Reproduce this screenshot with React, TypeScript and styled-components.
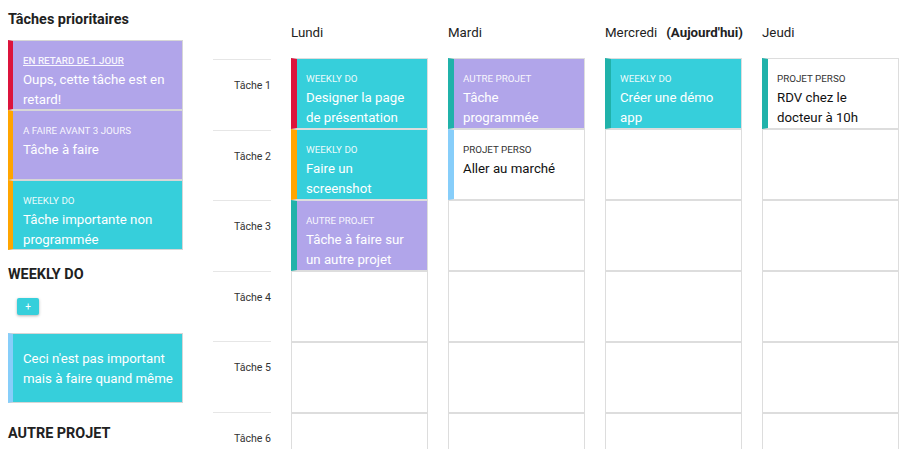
import styled, { createGlobalStyle } from "styled-components"

const GlobalStyle = createGlobalStyle`
  body {
    margin: 0;
    font-family: Roboto, "Liberation Sans", sans-serif;
    background: #ffffff;
    overflow: hidden;
  }
`

const PURPLE = "#b1a5ea"
const CYAN = "#36cfdb"

type Task = {
  label?: string
  title: string
  bg: string
  strip: string
  late?: boolean
}

const priorities: Task[] = [
  { label: "En retard de 1 jour", title: "Oups, cette tâche est en retard!", bg: PURPLE, strip: "crimson", late: true },
  { label: "A faire avant 3 jours", title: "Tâche à faire", bg: PURPLE, strip: "orange" },
  { label: "Weekly do", title: "Tâche importante non programmée", bg: CYAN, strip: "orange" },
]

const days: { name: string; today?: boolean; tasks: (Task | null)[] }[] = [
  {
    name: "Lundi",
    tasks: [
      { label: "Weekly do", title: "Designer la page de présentation", bg: CYAN, strip: "crimson" },
      { label: "Weekly do", title: "Faire un screenshot", bg: CYAN, strip: "orange" },
      { label: "Autre projet", title: "Tâche à faire sur un autre projet", bg: PURPLE, strip: "lightseagreen" },
      null, null, null,
    ],
  },
  {
    name: "Mardi",
    tasks: [
      { label: "Autre projet", title: "Tâche programmée", bg: PURPLE, strip: "lightseagreen" },
      { label: "Projet perso", title: "Aller au marché", bg: "#ffffff", strip: "lightskyblue" },
      null, null, null, null,
    ],
  },
  {
    name: "Mercredi",
    today: true,
    tasks: [
      { label: "Weekly do", title: "Créer une démo app", bg: CYAN, strip: "lightseagreen" },
      null, null, null, null, null,
    ],
  },
  {
    name: "Jeudi",
    tasks: [
      { label: "Projet perso", title: "RDV chez le docteur à 10h", bg: "#ffffff", strip: "lightseagreen" },
      null, null, null, null, null,
    ],
  },
]

const rows = ["Tâche 1", "Tâche 2", "Tâche 3", "Tâche 4", "Tâche 5", "Tâche 6"]

const CardBody = ({ task }: { task: Task }) => {
  const light = task.bg !== "#ffffff"
  return (
    <>
      {task.label && (
        <CardLabel $light={light} $underline={!!task.late}>
          {task.label}
        </CardLabel>
      )}
      <CardTitle $light={light}>{task.title}</CardTitle>
    </>
  )
}

const App = () => {
  return (
    <Page>
      <GlobalStyle />
      <Sidebar>
        <SectionTitle>Tâches prioritaires</SectionTitle>
        <div>
          {priorities.map((t, i) => (
            <SideCard key={i} $bg={t.bg} $strip={t.strip}>
              <CardBody task={t} />
            </SideCard>
          ))}
        </div>
        <SectionTitle $top={16}>WEEKLY DO</SectionTitle>
        <AddButton>+</AddButton>
        <SideCard $bg={CYAN} $strip="lightskyblue">
          <CardTitle $light>Ceci n'est pas important mais à faire quand même</CardTitle>
        </SideCard>
        <SectionTitle $top={22}>AUTRE PROJET</SectionTitle>
      </Sidebar>

      <Planner>
        <LabelCol>
          <LabelHead />
          {rows.map((r) => (
            <RowLabel key={r}>{r}</RowLabel>
          ))}
        </LabelCol>
        {days.map((d) => (
          <DayCol key={d.name}>
            <DayHead>
              {d.name}
              {d.today && <Today>(Aujourd'hui)</Today>}
            </DayHead>
            {d.tasks.map((t, i) =>
              t ? (
                <Cell key={i} $bg={t.bg} $strip={t.strip}>
                  <CardBody task={t} />
                </Cell>
              ) : (
                <Cell key={i} $bg="#ffffff" />
              )
            )}
          </DayCol>
        ))}
      </Planner>
    </Page>
  )
}

export default App

const Page = styled.div`
  display: flex;
  align-items: flex-start;
  padding-left: 8px;
  height: 449px;
  overflow: hidden;
`

const Sidebar = styled.div`
  width: 175px;
  flex: none;
`

const SectionTitle = styled.h2<{ $top?: number }>`
  margin: ${(p) => p.$top ?? 11}px 0 0 0;
  font-size: 14.4px;
  line-height: 18px;
  font-weight: 700;
  color: #212121;
  margin-bottom: ${(p) => (p.$top ? 14 : 11)}px;
`

const SideCard = styled.div<{ $bg: string; $strip: string }>`
  box-sizing: border-box;
  height: 70px;
  padding: 13px 4px 0 10px;
  background: ${(p) => p.$bg};
  border: 1px solid #d6d6d6;
  border-left: 5px solid ${(p) => p.$strip};
  overflow: hidden;
`

const CardLabel = styled.div<{ $light: boolean; $underline: boolean }>`
  font-size: 9.8px;
  line-height: 14px;
  text-transform: uppercase;
  color: ${(p) => (p.$light ? "rgba(255,255,255,0.92)" : "#333333")};
  text-decoration: ${(p) => (p.$underline ? "underline" : "none")};
  font-weight: ${(p) => (p.$underline ? 500 : 400)};
`

const CardTitle = styled.div<{ $light: boolean }>`
  margin-top: 2px;
  font-size: 13.25px;
  line-height: 20px;
  color: ${(p) => (p.$light ? "#ffffff" : "#111111")};
`

const AddButton = styled.button`
  display: block;
  width: 22px;
  height: 17px;
  margin: 0 0 18px 9px;
  padding: 0;
  border: none;
  border-radius: 2px;
  background: ${CYAN};
  color: #ffffff;
  font-family: Roboto, sans-serif;
  font-size: 10px;
  line-height: 17px;
  box-shadow: 0 1px 3px rgba(0, 0, 0, 0.3);
`

const Planner = styled.div`
  display: flex;
  gap: 20px;
  margin-left: 30px;
`

const LabelCol = styled.div`
  width: 58px;
  flex: none;
`

const LabelHead = styled.div`
  height: 59px;
`

const RowLabel = styled.div`
  box-sizing: border-box;
  height: 70.6px;
  padding-top: 19px;
  border-top: 1px solid #e6e6e6;
  text-align: right;
  font-size: 10.6px;
  line-height: 14px;
  color: #333333;
`

const DayCol = styled.div`
  width: 137px;
  flex: none;
`

const DayHead = styled.div`
  box-sizing: border-box;
  height: 58px;
  padding-top: 24px;
  font-size: 13.3px;
  line-height: 18px;
  color: #222222;
  white-space: nowrap;
`

const Today = styled.span`
  margin-left: 9px;
  font-weight: 700;
`

const Cell = styled.div<{ $bg: string; $strip?: string }>`
  box-sizing: border-box;
  height: 71px;
  padding: 13px 16px 0 ${(p) => (p.$strip ? 9 : 15)}px;
  background: ${(p) => p.$bg};
  border: 1px solid #dddddd;
  border-left: ${(p) => (p.$strip ? `6px solid ${p.$strip}` : "1px solid #dddddd")};
  overflow: hidden;
`
